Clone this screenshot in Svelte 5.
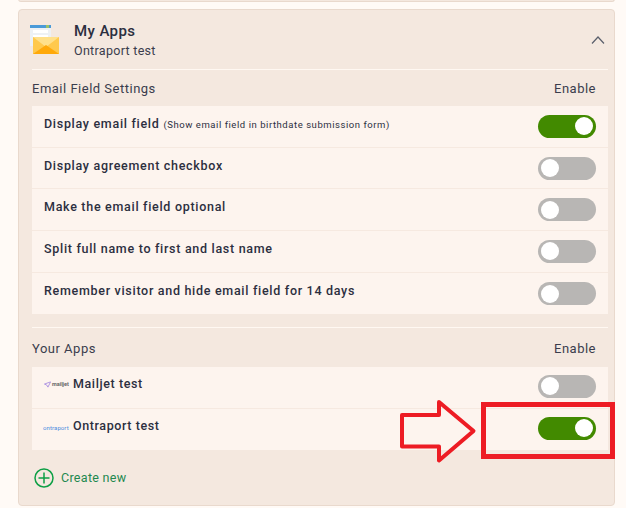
<script lang="ts">
  const settings = [
    { label: 'Display email field', hint: '(Show email field in birthdate submission form)', on: true },
    { label: 'Display agreement checkbox', on: false },
    { label: 'Make the email field optional', on: false },
    { label: 'Split full name to first and last name', on: false },
    { label: 'Remember visitor and hide email field for 14 days', on: false }
  ];
</script>

<div class="page">
  <div class="prev-card"></div>

  <section class="card">
    <header class="card-head">
      <svg class="app-icon" width="32" height="32" viewBox="0 0 32 32">
        <rect x="0" y="0" width="21" height="21" fill="#edf1f5" />
        <rect x="0" y="0" width="21" height="3" fill="#4a9ad8" />
        <rect x="16" y="0" width="3" height="3" fill="#9ac26a" />
        <rect x="3" y="5" width="15" height="3" fill="#fff" />
        <rect x="3" y="10" width="15" height="3" fill="#fff" />
        <rect x="3" y="15" width="15" height="3" fill="#fff" />
        <rect x="3" y="12" width="26" height="17" fill="#ffc94d" />
        <path d="M3 12 L29 12 L16 22 Z" fill="#ffe08a" />
        <path d="M3 29 L16 20 L29 29 Z" fill="#ffa90a" />
      </svg>
      <div class="head-text">
        <div class="title">My Apps</div>
        <div class="subtitle">Ontraport test</div>
      </div>
      <svg class="chevron" width="14" height="8" viewBox="0 0 14 8">
        <path d="M1 7.5 L7 1 L13 7.5" fill="none" stroke="#5a5f6b" stroke-width="1.2" />
      </svg>
    </header>

    <div class="section-head first">
      <span>Email Field Settings</span>
      <span>Enable</span>
    </div>
    <div class="list">
      {#each settings as s}
        <div class="row">
          <div class="row-label">
            <b>{s.label}</b>
            {#if s.hint}<small>{s.hint}</small>{/if}
          </div>
          <span class="toggle" class:on={s.on}><i></i></span>
        </div>
      {/each}
    </div>

    <div class="section-head second">
      <span>Your Apps</span>
      <span>Enable</span>
    </div>
    <div class="list">
      <div class="row app">
        <div class="row-label">
          <span class="logo mailjet">
            <svg width="7" height="7" viewBox="0 0 8 7">
              <path d="M7.5 .5 L.5 3 L3 4 L4.5 6.5 Z" fill="none" stroke="#a78be0" stroke-width="1" />
            </svg>
            <span>mailjet</span>
          </span>
          <b>Mailjet test</b>
        </div>
        <span class="toggle"><i></i></span>
      </div>
      <div class="row app">
        <div class="row-label">
          <span class="logo ontraport">ontraport</span>
          <b>Ontraport test</b>
        </div>
        <span class="toggle on"><i></i></span>
      </div>
    </div>

    <div class="create">
      <svg width="20" height="20" viewBox="0 0 20 20">
        <circle cx="10" cy="10" r="9" fill="none" stroke="#0d9f45" stroke-width="1.5" />
        <path d="M10 4.5 V15.5 M4.5 10 H15.5" stroke="#0d9f45" stroke-width="1.5" />
      </svg>
      <span>Create new</span>
    </div>
  </section>

  <!-- red annotation drawn over the screenshot -->
  <svg class="annotation" width="626" height="508" viewBox="0 0 626 508">
    <rect x="483.5" y="404.5" width="129" height="52" fill="none" stroke="#ed1c24" stroke-width="5" />
    <path d="M402 415 H439 V402 L473.5 431 L439 460.5 V446.5 H402 Z" fill="none" stroke="#ed1c24" stroke-width="4" stroke-linejoin="round" />
  </svg>
</div>

<style>
  :global(body) {
    margin: 0;
    background: #fffaf6;
  }

  .page {
    position: relative;
    width: 626px;
    height: 508px;
    overflow: hidden;
    font-family: Roboto, "Liberation Sans", sans-serif;
    color: #2c2f3f;
    background: #fffaf6;
  }

  .prev-card {
    height: 3px;
    margin: -1px 11px 0 18px;
    box-sizing: border-box;
    background: #f4e8df;
    border: 1px solid #e9d9cd;
    border-top: 0;
    border-radius: 0 0 4px 4px;
  }

  .card {
    box-sizing: border-box;
    height: 497px;
    margin: 7px 11px 0 18px;
    padding: 0 6px 0 13px;
    background: #f4e8df;
    border: 1px solid #e9d9cd;
    border-radius: 4px;
  }

  .card-head {
    display: flex;
    align-items: center;
    height: 59px;
    border-bottom: 1px solid #fff8f2;
    padding-right: 3px;
  }

  .app-icon {
    margin: 3px 0 0 -2px;
    flex: none;
  }

  .head-text {
    flex: 1;
    margin: 2px 0 0 12px;
  }

  .title {
    font-size: 15px;
    font-weight: 500;
    letter-spacing: 0.4px;
    line-height: 20px;
  }

  .subtitle {
    font-size: 12.5px;
    letter-spacing: 0.3px;
    line-height: 18px;
    margin-top: 1px;
    color: #3a3d4d;
  }

  .section-head {
    display: flex;
    justify-content: space-between;
    align-items: center;
    font-size: 13px;
    letter-spacing: 0.5px;
    padding-right: 12px;
    color: #3a3d4d;
  }

  .section-head.first {
    height: 36px;
  }

  .section-head.second {
    box-sizing: border-box;
    height: 40px;
    margin-top: 12.5px;
    padding-top: 2px;
    border-top: 1px solid #fff8f2;
  }

  .list {
    background: #fdf4ee;
  }

  .row {
    display: flex;
    align-items: center;
    justify-content: space-between;
    box-sizing: border-box;
    height: 41.7px;
    padding: 0 12px;
    border-bottom: 1px solid #f6e9e0;
  }

  .row:last-child {
    border-bottom: 0;
  }

  .row-label {
    display: flex;
    align-items: baseline;
    margin-top: -6px;
    font-size: 12.5px;
    letter-spacing: 0.7px;
  }

  .row.app .row-label {
    margin-top: -8px;
    letter-spacing: 0.6px;
  }

  .row.app .toggle {
    margin-top: -2px;
  }

  .row-label b {
    font-weight: 500;
  }

  .row-label small {
    margin-left: 4px;
    font-size: 9.5px;
    letter-spacing: 0.55px;
  }

  .toggle {
    position: relative;
    display: block;
    flex: none;
    width: 58px;
    height: 23px;
    border-radius: 12px;
    background: #b8b6b4;
  }

  .toggle.on {
    background: #428a00;
  }

  .toggle i {
    position: absolute;
    top: 2.5px;
    left: 3px;
    width: 18px;
    height: 18px;
    border-radius: 50%;
    background: #fff;
  }

  .toggle.on i {
    left: auto;
    right: 3px;
  }

  .logo {
    display: inline-flex;
    align-items: center;
    width: 29px;
    flex: none;
    white-space: nowrap;
    overflow: hidden;
    letter-spacing: 0;
  }

  .mailjet {
    gap: 1px;
    font-size: 5.5px;
    color: #666;
    font-weight: 700;
  }

  .ontraport {
    font-size: 6px;
    color: #4f8ee0;
    letter-spacing: 0.1px;
    margin-left: -1px;
    margin-right: 1px;
  }

  .create {
    display: flex;
    align-items: center;
    gap: 7px;
    height: 55px;
    padding-left: 2px;
    font-size: 12.5px;
    letter-spacing: 0.3px;
    color: #22884f;
  }

  .annotation {
    position: absolute;
    left: 0;
    top: 0;
  }
</style>
